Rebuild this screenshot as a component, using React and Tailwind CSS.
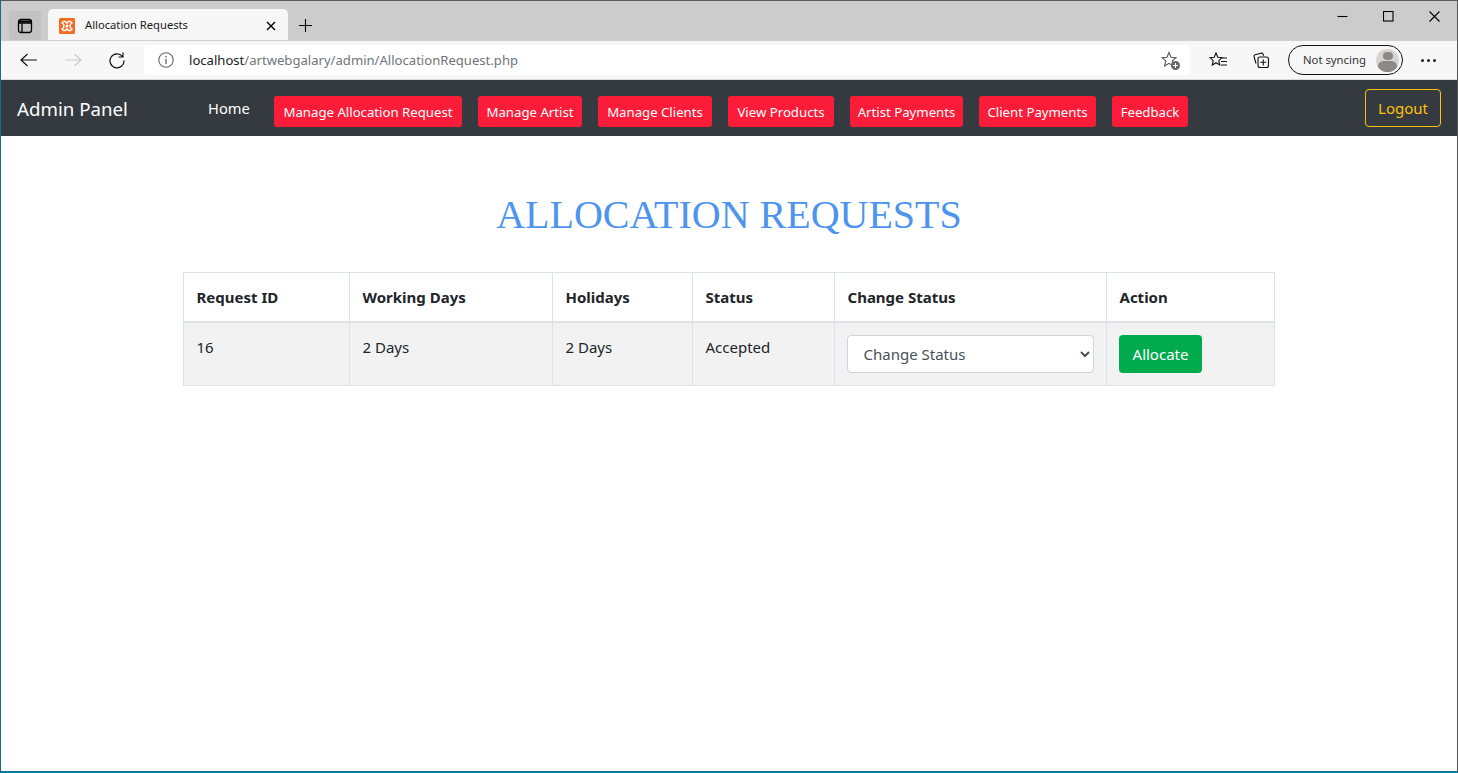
import React from "react";

const segoe = "[font-family:'Noto_Sans','Open_Sans',sans-serif]";

const navItems = [
  ["Manage Allocation Request", "w-[188px]"],
  ["Manage Artist", "w-[104px]"],
  ["Manage Clients", "w-[114px]"],
  ["View Products", "w-[106px]"],
  ["Artist Payments", "w-[113px]"],
  ["Client Payments", "w-[117px]"],
  ["Feedback", "w-[76px]"],
];

const Ico = ({ children, className = "", w = 20, h = 20 }) => (
  <svg width={w} height={h} viewBox={`0 0 ${w} ${h}`} fill="none" stroke="currentColor" strokeWidth="1.1" className={className}>
    {children}
  </svg>
);

function TabStrip() {
  return (
    <div className="h-[40px] bg-[#cccccc] flex items-end border-t border-[#555b60] shrink-0">
      <div className="ml-[8px] mb-[1px] mt-[10px] w-[32px] h-[29px] rounded-[3px] bg-[#c2c2c2] flex items-center justify-center self-start">
        <Ico w={16} h={16} className="text-black">
          <rect x="1.5" y="1.5" width="13" height="13" rx="2.5" strokeWidth="1.3" />
          <path d="M1.5 5h13M5 5v9.5" strokeWidth="1.3" />
          <path d="M2 3.5h12" strokeWidth="2" />
        </Ico>
      </div>
      <div className="ml-[7px] w-[240px] h-[31px] bg-[#f7f7f7] rounded-t-[5px] flex items-center pl-[11px] pr-[12px] pt-[2px]">
        <svg width="16" height="16" viewBox="0 0 16 16" className="shrink-0">
          <rect width="16" height="16" rx="1.5" fill="#f26b21" />
          <path d="M4.500 3.500h2L8 5.200l1.500-1.700h2L13 5l-1.800 1.500v3L13 11l-1.500 1.500h-2L8 10.800l-1.500 1.700h-2L3 11l1.800-1.500v-3L3 5z" fill="none" stroke="#fff" strokeWidth="1.400" />
          <rect x="6.700" y="6.700" width="2.600" height="2.600" fill="#fff" />
        </svg>
        <span className={`ml-[10px] text-[11.2px] text-[#1a1a1a] whitespace-nowrap ${segoe}`}>Allocation Requests</span>
        <Ico w={10} h={10} className="ml-auto text-black">
          <path d="M1 1l8 8M9 1l-8 8" strokeWidth="1.400" />
        </Ico>
      </div>
      <div className="ml-[10px] mb-[7px] text-black">
        <Ico w={15} h={15}>
          <path d="M7.500 1v13M1 7.500h13" />
        </Ico>
      </div>
      <div className="ml-auto self-start flex items-center h-[30px] text-black">
        <div className="w-[46px] flex justify-center"><Ico w={11} h={11}><path d="M.500 5.500h10" /></Ico></div>
        <div className="w-[46px] flex justify-center"><Ico w={11} h={11}><rect x=".5" y=".5" width="9.500" height="9.500" /></Ico></div>
        <div className="w-[46px] flex justify-center"><Ico w={11} h={11}><path d="M.5.5l10 10M10.500.5l-10 10" /></Ico></div>
      </div>
    </div>
  );
}

function Toolbar() {
  return (
    <div className="h-[40px] bg-[#f7f7f7] border-t border-[#d0d0d0] border-b border-b-[#dcdcdc] flex items-center shrink-0">
      <div className="ml-[19px] text-[#111]">
        <Ico w={18} h={14}><path d="M1 7h16M7.500 1L1 7l6.500 6" strokeWidth="1.200" /></Ico>
      </div>
      <div className="ml-[26px] text-[#c9c9c9]">
        <Ico w={18} h={14}><path d="M1 7h16M10.500 1L17 7l-6.500 6" strokeWidth="1.200" /></Ico>
      </div>
      <div className="ml-[26px] text-[#111]">
        <Ico w={18} h={18}><path d="M14.500 5.500A7 7 0 1 0 16 9.500M15 1.500v4.500h-4.500" strokeWidth="1.200" /></Ico>
      </div>
      <div className="ml-[18px] w-[1046px] h-[30px] bg-white rounded-[4px] flex items-center">
        <div className="ml-[14px] text-[#666]">
          <Ico w={16} h={16}>
            <circle cx="8" cy="8" r="7.200" />
            <path d="M8 7v5M8 4v1.500" strokeWidth="1.300" />
          </Ico>
        </div>
        <span className={`ml-[15px] mt-[1px] text-[13.1px] whitespace-nowrap text-[#70757a] ${segoe}`}>
          <span className="text-[#202124]">localhost</span>/artwebgalary/admin/AllocationRequest.php
        </span>
        <div className="ml-auto mr-[11px] text-[#555] relative w-[18px] h-[18px]">
          <Ico w={18} h={18}>
            <path d="M8 1.500l2 4.700 5 .4-3.800 3.300 1.100 5L8 12.300l-4.300 2.600 1.100-5L1 6.600l5-.4z" />
          </Ico>
          <span className="absolute right-[-1px] bottom-[-1px] w-[9px] h-[9px] rounded-full bg-[#666] flex items-center justify-center">
            <svg width="7" height="7" viewBox="0 0 7 7" stroke="#fff" strokeWidth="1"><path d="M3.500 1v5M1 3.500h5" /></svg>
          </span>
        </div>
      </div>
      <div className="ml-[18px] text-[#111]">
        <Ico w={20} h={18}>
          <path d="M8 2l1.800 4.300 4.200.4-3.200 2.900.9 4.300L8 11.700 4.300 14l.9-4.300L2 6.700l4.200-.4z" />
          <path d="M14 7h5M13 10.500h6M13 14h6" />
        </Ico>
      </div>
      <div className="ml-[24px] text-[#111]">
        <Ico w={18} h={18}>
          <path d="M4 12.500L2 5.500Q1.800 4 3.200 3.700L9 2.200q1.500-.3 2 1l.6 1.500" />
          <rect x="6" y="6" width="10.500" height="10.500" rx="2" />
          <path d="M11.250 8.500v6M8.250 11.250h6" />
        </Ico>
      </div>
      <div className="ml-[18px] w-[115px] h-[30px] rounded-full border border-[#111] flex items-center bg-[#f7f7f7]">
        <span className={`ml-[14px] text-[11.3px] text-[#333] whitespace-nowrap ${segoe}`}>Not syncing</span>
        <div className="ml-auto mr-[3px] w-[23px] h-[23px] rounded-full bg-[#d6d3d1] overflow-hidden flex flex-col items-center">
          <span className="mt-[3px] w-[10px] h-[10px] rounded-full bg-[#8c8884]" />
          <span className="mt-[1px] w-[19px] h-[12px] rounded-full bg-[#8c8884]" />
        </div>
      </div>
      <div className="ml-[18px] flex gap-[3px]">
        <span className="w-[3px] h-[3px] rounded-full bg-[#222]" />
        <span className="w-[3px] h-[3px] rounded-full bg-[#222]" />
        <span className="w-[3px] h-[3px] rounded-full bg-[#222]" />
      </div>
    </div>
  );
}

function Navbar() {
  return (
    <nav className={`h-[56px] bg-[#343a40] flex items-center shrink-0 ${segoe}`}>
      <span className="ml-[16px] w-[111px] text-[18.7px] leading-[28px] text-white whitespace-nowrap mt-[1px]">Admin Panel</span>
      <span className="ml-[80px] w-[43px] text-[14.700px] text-white whitespace-nowrap">Home</span>
      <div className="ml-[23px] flex gap-[16px] mt-[6px]">
        {navItems.map(([t, w]) => (
          <span key={t} className={`${w} h-[31px] pt-[4px] bg-[#fa1c38] rounded-[3px] text-white text-[13.2px] flex items-center justify-center whitespace-nowrap`}>
            {t}
          </span>
        ))}
      </div>
      <button className="ml-auto mr-[16px] w-[76px] h-[38px] rounded-[4px] border border-[#ffc107] text-[#ffc107] text-[15px]">
        Logout
      </button>
    </nav>
  );
}

const cell = "border border-[#dee2e6] pr-[12px] align-top";

function Content() {
  return (
    <main className="flex-1 bg-white flex flex-col items-center">
      <h1 className="mt-[54px] h-[82px] text-[40px] leading-[50px] text-[#4d94ee] [font-family:'Liberation_Serif',serif]">
        ALLOCATION REQUESTS
      </h1>
      <table className={`w-[1091px] mr-[1px] table-fixed border-collapse text-[15px] text-[#212529] ${segoe}`}>
        <colgroup>
          <col className="w-[166px]" />
          <col className="w-[203px]" />
          <col className="w-[140px]" />
          <col className="w-[142px]" />
          <col className="w-[272px]" />
          <col className="w-[168px]" />
        </colgroup>
        <thead>
          <tr className="h-[49px]">
            {["Request ID", "Working Days", "Holidays", "Status", "Change Status", "Action"].map((h) => (
              <th key={h} className={`${cell} border-b-2 pl-[13px] pt-[12px] pb-[10px] text-left font-bold leading-[24px]`}>{h}</th>
            ))}
          </tr>
        </thead>
        <tbody>
          <tr className="bg-[#f2f2f2] h-[63px]">
            <td className={`${cell} pl-[13px] py-[12px] leading-[24px]`}>16</td>
            <td className={`${cell} pl-[13px] py-[12px] leading-[24px]`}>2 Days</td>
            <td className={`${cell} pl-[13px] py-[12px] leading-[24px]`}>2 Days</td>
            <td className={`${cell} pl-[13px] py-[12px] leading-[24px]`}>Accepted</td>
            <td className={`${cell} pl-[12px] py-[12px]`}>
              <select defaultValue="c" className="block w-full h-[38px] bg-white border border-[#ced4da] rounded-[4px] pl-[12px] pr-[4px] text-[#495057] text-[15px] outline-none">
                <option value="c">Change Status</option>
              </select>
            </td>
            <td className={`${cell} pl-[12px] py-[12px]`}>
              <button className="w-[83px] h-[38px] pl-[1px] pt-[2px] bg-[#00ab4e] rounded-[4px] text-white text-[15px]">Allocate</button>
            </td>
          </tr>
        </tbody>
      </table>
    </main>
  );
}

export default function App() {
  return (
    <div className="w-[1458px] h-[773px] overflow-hidden flex flex-col bg-white border-l border-l-[#1b6a85] border-r border-r-[#555] border-b-2 border-b-[#0a78a5]">
      <TabStrip />
      <Toolbar />
      <Navbar />
      <Content />
    </div>
  );
}
